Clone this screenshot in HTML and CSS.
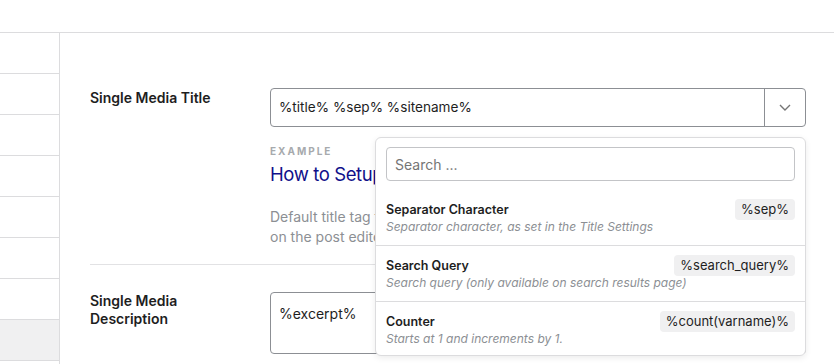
FILE: index.html
```html
<!DOCTYPE html>
<html lang="en">

<head>
  <meta charset="UTF-8" />
  <meta name="viewport" content="width=device-width, initial-scale=1.0" />
  <title>Media Settings</title>
  <link rel="stylesheet" href="styles.css">
</head>

<body>

  <div class="topbar"></div>

  <div class="layout">
    <nav class="sidebar">
      <div class="side-row"></div>
      <div class="side-row"></div>
      <div class="side-row"></div>
      <div class="side-row"></div>
      <div class="side-row"></div>
      <div class="side-row"></div>
      <div class="side-row"></div>
      <div class="side-row active"></div>
    </nav>

    <main class="content">
      <div class="setting">
        <div class="setting-label">Single Media Title</div>
        <div class="setting-field">
          <div class="tag-input">
            <span class="tag-text">%title% %sep% %sitename%</span>
            <span class="toggle">
              <svg width="12" height="7" viewBox="0 0 12 7">
                <polyline points="1,1 6,6 11,1" fill="none" stroke="#757575" stroke-width="1.4" />
              </svg>
            </span>
          </div>

          <!-- preview, partly covered by the open dropdown -->
          <div class="example">
            <div class="example-label">EXAMPLE</div>
            <div class="example-title">How to Setup Media Titles in WordPress</div>
            <p class="help">Default title tag for single media pages. This can be overridden<br>on the post editor screen.</p>
          </div>

          <div class="popup">
            <div class="search-wrap">
              <input class="search" type="text" placeholder="Search ...">
            </div>
            <div class="var-item">
              <div class="var-head">
                <span class="var-name">Separator Character</span>
                <span class="var-tag">%sep%</span>
              </div>
              <div class="var-desc">Separator character, as set in the Title Settings</div>
            </div>
            <div class="var-item">
              <div class="var-head">
                <span class="var-name">Search Query</span>
                <span class="var-tag">%search_query%</span>
              </div>
              <div class="var-desc">Search query (only available on search results page)</div>
            </div>
            <div class="var-item">
              <div class="var-head">
                <span class="var-name">Counter</span>
                <span class="var-tag">%count(varname)%</span>
              </div>
              <div class="var-desc">Starts at 1 and increments by 1.</div>
            </div>
          </div>
        </div>
      </div>

      <div class="setting">
        <div class="setting-label">Single Media<br>Description</div>
        <div class="setting-field">
          <div class="textarea">%excerpt%</div>
        </div>
      </div>
    </main>
  </div>

</body>

</html>
```

FILE: styles.css
```css
body {
  margin: 0;
  font-family: 'Inter', 'Noto Sans', sans-serif;
  background: #fff;
  color: #1e1e1e;
  height: 364px;
  overflow: hidden;
}

.topbar {
  height: 32px;
  border-bottom: 1px solid #dcdcde;
}

.layout {
  display: flex;
}

.sidebar {
  width: 59px;
  border-right: 1px solid #dcdcde;
  height: 340px;
}

.side-row {
  height: 40px;
  border-bottom: 1px solid #dcdcde;
}

.side-row.active {
  background: #f0f0f1;
}

.content {
  flex: 1;
  padding: 55px 0 0 30px;
}

.setting {
  display: flex;
  width: 716px;
}

.setting + .setting {
  border-top: 1px solid #e2e2e4;
  margin-top: 17px;
  padding-top: 27px;
}

.setting-label {
  width: 180px;
  font-size: 14px;
  font-weight: 600;
  line-height: 18px;
  padding-top: 1px;
}

.setting + .setting .setting-label {
  padding-top: 0;
}

.setting-field {
  position: relative;
  width: 536px;
}

.tag-input {
  display: flex;
  height: 39px;
  box-sizing: border-box;
  border: 1px solid #8c8f94;
  border-radius: 4px;
}

.tag-text {
  flex: 1;
  padding-left: 8px;
  font-size: 13.6px;
  line-height: 37px;
}

.toggle {
  width: 40px;
  border-left: 1px solid #8c8f94;
  display: flex;
  align-items: center;
  justify-content: center;
}

.example {
  margin-top: 17px;
}

.example-label {
  font-size: 10px;
  font-weight: 700;
  letter-spacing: 2px;
  color: #a7aaad;
  line-height: 14px;
}

.example-title {
  margin-top: 3px;
  font-size: 18.5px;
  letter-spacing: -0.4px;
  line-height: 26px;
  color: #10108a;
  white-space: nowrap;
}

.help {
  margin: 20px 0 0;
  font-size: 14px;
  line-height: 20px;
  color: #8c8f94;
  white-space: nowrap;
}

.textarea {
  height: 62px;
  box-sizing: border-box;
  border: 1px solid #8c8f94;
  border-radius: 4px;
  padding: 11px 8px;
  font-size: 14px;
  line-height: 20px;
}

.popup {
  position: absolute;
  z-index: 10;
  left: 105px;
  top: 49px;
  width: 431px;
  box-sizing: border-box;
  background: #fff;
  border: 1px solid #dcdcde;
  border-radius: 6px;
  box-shadow: 0 2px 6px rgba(0, 0, 0, 0.08);
}

.search-wrap {
  padding: 9px 10px 0;
}

.search {
  width: 100%;
  height: 34px;
  box-sizing: border-box;
  border: 1px solid #c3c4c7;
  border-radius: 4px;
  padding: 0 8px;
  font-family: inherit;
  font-size: 14px;
  color: #1e1e1e;
  outline: none;
}

.search::placeholder {
  color: #757575;
}

.search-wrap + .var-item {
  margin-top: 9px;
}

.var-item {
  padding: 10px 10px 9px;
  border-bottom: 1px solid #dcdcde;
}

.var-item:last-child {
  border-bottom: none;
  padding-bottom: 7px;
}

.var-head {
  display: flex;
  justify-content: space-between;
  align-items: center;
  height: 18px;
}

.var-name {
  font-size: 12.5px;
  font-weight: 600;
}

.var-tag {
  background: #f0f0f1;
  border-radius: 4px;
  padding: 0 6px;
  font-size: 13px;
  line-height: 21px;
}

.var-desc {
  font-size: 12px;
  font-style: italic;
  line-height: 18px;
  color: #8c8f94;
}
```
